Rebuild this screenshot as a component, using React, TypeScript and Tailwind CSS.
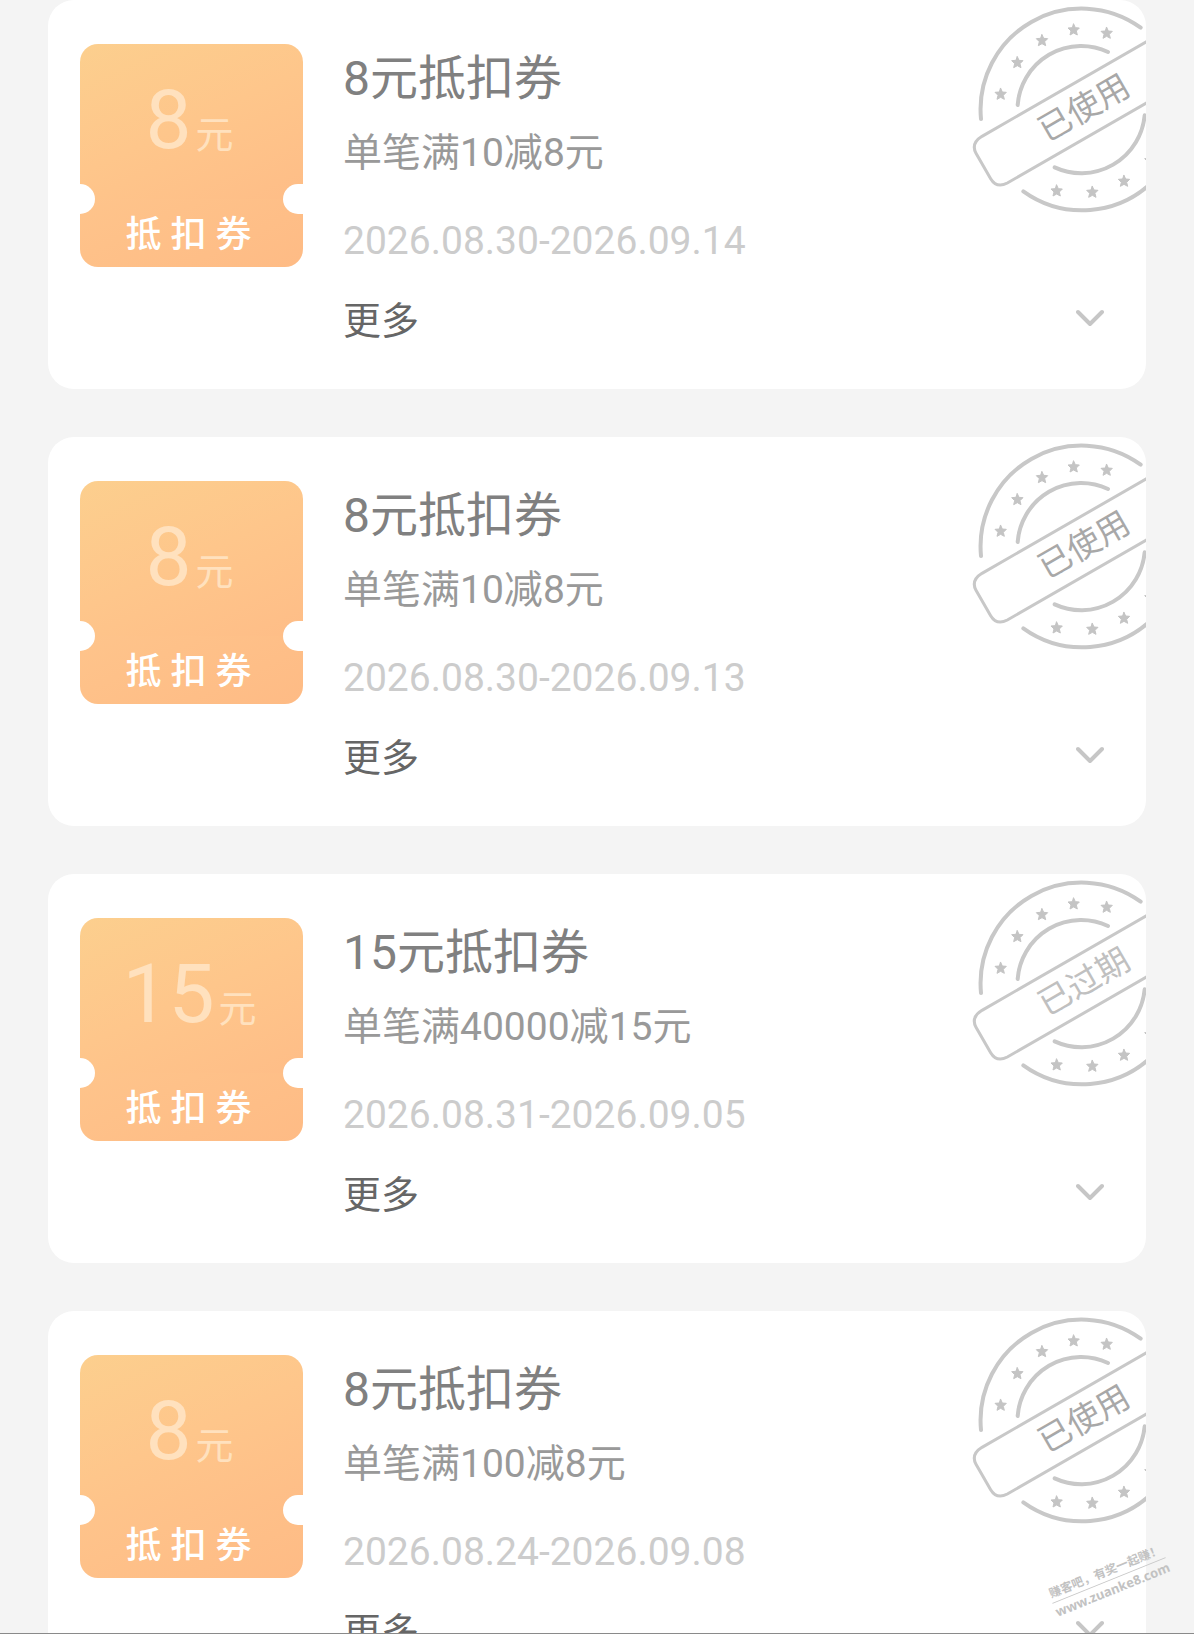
import { useState } from "react";
import clsx from "clsx";

type CouponStatus = "used" | "expired";

type Coupon = {
  id: number;
  amount: number;
  threshold: number;
  start: string;
  end: string;
  status: CouponStatus;
};

const COUPONS: Coupon[] = [
  { id: 1, amount: 8, threshold: 10, start: "2026.08.30", end: "2026.09.14", status: "used" },
  { id: 2, amount: 8, threshold: 10, start: "2026.08.30", end: "2026.09.13", status: "used" },
  { id: 3, amount: 15, threshold: 40000, start: "2026.08.31", end: "2026.09.05", status: "expired" },
  { id: 4, amount: 8, threshold: 100, start: "2026.08.24", end: "2026.09.08", status: "used" },
];

const STATUS_LABELS: Record<CouponStatus, string> = {
  used: "已使用",
  expired: "已过期",
};

const STAMP_STARS = [
  [122, 282],
  [172, 187],
  [246, 121],
  [341, 89],
  [440, 99],
  [290, 572],
  [397, 576],
  [492, 543],
  [571, 481],
];

export default function App() {
  return (
    <div className="relative h-screen overflow-hidden border-b border-[#8a8a8a] bg-[#f4f4f4] font-[Roboto,'Noto_Sans_CJK_SC',sans-serif]">
      <main className="flex flex-col gap-12 px-12">
        {COUPONS.map((coupon) => (
          <CouponCard key={coupon.id} coupon={coupon} />
        ))}
      </main>
      <Watermark />
    </div>
  );
}

function CouponCard({ coupon }: { coupon: Coupon }) {
  const [open, setOpen] = useState(false);

  return (
    <article className="relative flex shrink-0 items-start gap-10 overflow-hidden rounded-[26px] bg-white pt-11 pr-[42px] pb-11 pl-8">
      <Ticket amount={coupon.amount} />
      <div className="flex min-w-0 flex-1 flex-col pt-[7px]">
        <h2 className="text-[48px] leading-[56px] text-[#808080]">{coupon.amount}元抵扣券</h2>
        <p className="mt-[22px] text-[39px] leading-[48px] text-[#999999]">
          单笔满{coupon.threshold}减{coupon.amount}元
        </p>
        <p className="mt-10 text-[39px] leading-[48px] text-[#cccccc]">
          {coupon.start}-{coupon.end}
        </p>
        <button
          type="button"
          aria-expanded={open}
          onClick={() => setOpen(!open)}
          className="mt-8 flex items-center justify-between text-left text-[38px] leading-[48px] text-[#666666]"
        >
          更多
          <Chevron open={open} />
        </button>
        {open ? (
          <p className="mt-4 text-[30px] leading-[40px] text-[#999999]">{STATUS_LABELS[coupon.status]}</p>
        ) : null}
      </div>
      <Stamp status={coupon.status} />
    </article>
  );
}

function Ticket({ amount }: { amount: number }) {
  return (
    <div className="relative flex h-[223px] w-[223px] shrink-0 flex-col overflow-hidden rounded-[18px]">
      <div className="flex h-[155px] items-baseline justify-center gap-1 bg-linear-155 from-[#fccf8e] via-[#fec68b] to-[#febd87] pt-6 pr-1 text-[#ffe1be]">
        <span className="text-[82px] leading-[104px]">{amount}</span>
        <span className="text-[38px]">元</span>
      </div>
      <div className="flex flex-1 items-center justify-center gap-[9px] bg-linear-155 from-[#fec48b] to-[#febb85] pt-1 pr-[6px] text-[36px] leading-[48px] font-medium text-white">
        <span>抵</span>
        <span>扣</span>
        <span>券</span>
      </div>
      <span className="absolute top-[140px] left-0 h-[30px] w-[15px] rounded-r-full bg-white" />
      <span className="absolute top-[140px] right-0 h-[30px] w-5 rounded-l-full bg-white" />
    </div>
  );
}

function Stamp({ status }: { status: CouponStatus }) {
  return (
    <svg
      viewBox="0 0 558 690"
      className="pointer-events-none absolute top-0 right-0 h-[230px] w-[186px]"
      fill="none"
      stroke="#c8c8c8"
      strokeLinecap="round"
    >
      <g strokeWidth="12">
        <path d="M63 357 A303 303 0 0 1 542 83" />
        <path d="M190 574 A303 303 0 0 0 580 543" />
        <path d="M173 315 A191 191 0 0 1 444 156" />
        <path d="M284 502 A191 191 0 0 0 554 346" />
      </g>
      <path d="M572 118 L66 409 Q32 430 48 460 L92 536 Q110 566 142 549 L572 302" strokeWidth="9" />
      {STAMP_STARS.map(([x, y]) => (
        <path
          key={`${x}-${y}`}
          transform={`translate(${x} ${y})`}
          d="M0 -17 L5 -6 L17 -5 L8 4 L11 16 L0 10 L-11 16 L-8 4 L-17 -5 L-5 -6 Z"
          fill="#c4c4c4"
          stroke="#c4c4c4"
          strokeWidth="3"
        />
      ))}
      <text
        transform="translate(370 320) rotate(-30)"
        y="38"
        textAnchor="middle"
        stroke="none"
        className={clsx("text-[99px]", status === "used" ? "fill-[#a8a8a8]" : "fill-[#c0c0c0]")}
      >
        {STATUS_LABELS[status]}
      </text>
    </svg>
  );
}

function Chevron({ open }: { open: boolean }) {
  return (
    <svg
      viewBox="0 0 28 28"
      className={clsx("size-7", open && "rotate-180")}
      fill="none"
      stroke="#c6c6c6"
      strokeWidth="4"
      strokeLinecap="round"
      strokeLinejoin="round"
    >
      <path d="M2 5 L14 17 L26 5" />
    </svg>
  );
}

function Watermark() {
  return (
    <div className="pointer-events-none absolute right-6 bottom-[34px] flex -rotate-22 flex-col items-center font-bold whitespace-nowrap text-[#c2c2c2]">
      <span className="text-[12px] leading-[18px]">赚客吧，有奖一起赚！</span>
      <span className="border-t border-[#c8c8c8] font-['Noto_Sans',sans-serif] text-[13px] leading-[18px]">
        www.zuanke8.com
      </span>
    </div>
  );
}
